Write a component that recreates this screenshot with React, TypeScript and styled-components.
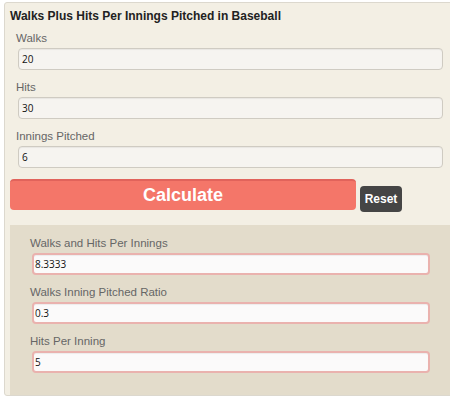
import React from "react";
import styled, { createGlobalStyle } from "styled-components";

const Global = createGlobalStyle`
  html, body { margin: 0; padding: 0; background: #ffffff; }
  body { font-family: "Liberation Sans", Arial, sans-serif; overflow: hidden; }
`;

const Page = styled.div`
  width: 450px;
  height: 401px;
  overflow: hidden;
  padding: 2px 0 0 4px;
  box-sizing: border-box;
`;

const Card = styled.div`
  width: 460px;
  height: 394px;
  box-sizing: border-box;
  background: #f3efe4;
  border: 1px solid #dcd8ce;
  border-radius: 3px;
  padding: 5px 0 0 5px;
`;

const Title = styled.h1`
  margin: 0 0 7px 0;
  font-size: 12px;
  font-weight: bold;
  color: #222;
  line-height: 16px;
`;

const Field = styled.div<{ $indent: number; $gap?: number }>`
  display: flex;
  flex-direction: column;
  padding-left: ${(p) => p.$indent}px;
  margin-bottom: ${(p) => p.$gap ?? 0}px;
`;

const Label = styled.label`
  font-size: 11.5px;
  color: #666;
  line-height: 15px;
  margin-bottom: 2px;
  margin-left: -2px;
`;

const Input = styled.input<{ $result?: boolean; $width: number }>`
  box-sizing: border-box;
  width: ${(p) => p.$width}px;
  height: 22px;
  padding: 0 0 0 ${(p) => (p.$result ? 1 : 3)}px;
  font-family: "Open Sans", "DejaVu Sans", sans-serif;
  font-size: 10px;
  color: #111;
  border-radius: 4px;
  outline: none;
  border: ${(p) => (p.$result ? "2px solid #eab2ae" : "1px solid #cfcbc2")};
  background: ${(p) => (p.$result ? "#fbfafa" : "#f6f4f0")};
  box-shadow: inset 0 1px 1px rgba(0, 0, 0, 0.06);
`;

const Actions = styled.div`
  display: flex;
  align-items: flex-start;
  gap: 4px;
  margin-top: 11px;
`;

const CalcButton = styled.button`
  width: 346px;
  height: 31px;
  box-sizing: border-box;
  border: none;
  border-top: 2px solid #e1635b;
  border-radius: 4px;
  background: #f47669;
  color: #fff;
  font-family: "Liberation Sans", Arial, sans-serif;
  font-weight: bold;
  font-size: 18px;
  padding: 0;
  cursor: pointer;
`;

const ResetButton = styled.button`
  margin-top: 7px;
  width: 42px;
  height: 26px;
  box-sizing: border-box;
  border: none;
  border-radius: 4px;
  background: #454545;
  color: #fff;
  font-family: "Liberation Sans", Arial, sans-serif;
  font-weight: bold;
  font-size: 12px;
  padding: 0;
  cursor: pointer;
`;

const Results = styled.div`
  margin-top: 13px;
  background: #e3dccb;
  height: 170px;
  box-sizing: border-box;
  padding: 11px 0 0 22px;
  display: flex;
  flex-direction: column;
  gap: 10px;
`;

const inputs = [
  { label: "Walks", value: "20" },
  { label: "Hits", value: "30" },
  { label: "Innings Pitched", value: "6" },
];

const results = [
  { label: "Walks and Hits Per Innings", value: "8.3333" },
  { label: "Walks Inning Pitched Ratio", value: "0.3" },
  { label: "Hits Per Inning", value: "5" },
];

export default function App() {
  return (
    <>
      <Global />
      <Page>
        <Card>
          <Title>Walks Plus Hits Per Innings Pitched in Baseball</Title>
          {inputs.map((f, i) => (
            <Field key={f.label} $indent={8} $gap={i < 2 ? 10 : 0}>
              <Label>{f.label}</Label>
              <Input $width={425} defaultValue={f.value} />
            </Field>
          ))}
          <Actions>
            <CalcButton>Calculate</CalcButton>
            <ResetButton>Reset</ResetButton>
          </Actions>
          <Results>
            {results.map((f) => (
              <Field key={f.label} $indent={0}>
                <Label>{f.label}</Label>
                <Input $result $width={398} defaultValue={f.value} readOnly />
              </Field>
            ))}
          </Results>
        </Card>
      </Page>
    </>
  );
}
